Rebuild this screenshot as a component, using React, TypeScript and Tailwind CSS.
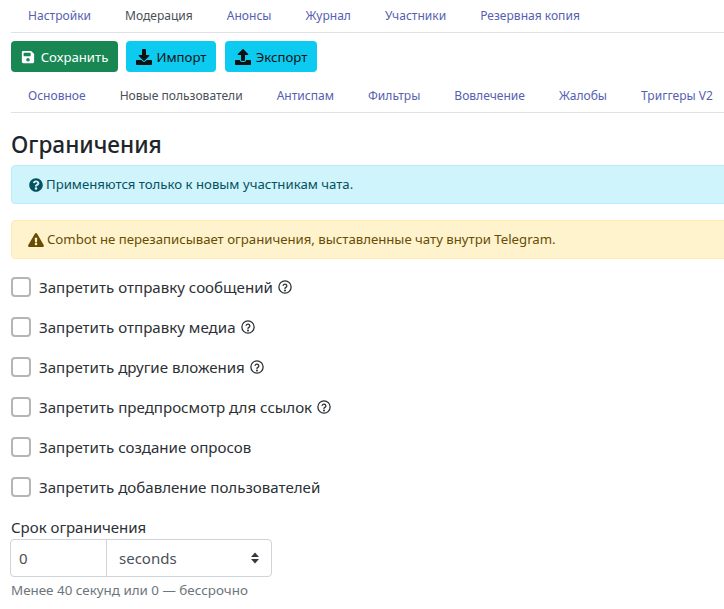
import React from "react";

const top = [
  ["Настройки", false],
  ["Модерация", true],
  ["Анонсы", false],
  ["Журнал", false],
  ["Участники", false],
  ["Резервная копия", false],
] as const;
const sub = [
  ["Основное", false],
  ["Новые пользователи", true],
  ["Антиспам", false],
  ["Фильтры", false],
  ["Вовлечение", false],
  ["Жалобы", false],
  ["Триггеры V2", false],
] as const;

function Tabs({ items }: { items: readonly (readonly [string, boolean])[] }) {
  return (
    <div className="flex h-[33px] items-center border-b border-[#dee2e6] whitespace-nowrap">
      {items.map(([t, active]) => (
        <span key={t} className={`px-[17px] text-[12.05px] leading-[18px] ${active ? "text-[#495057]" : "text-[#5561b0]"}`}>
          {t}
        </span>
      ))}
    </div>
  );
}

function Save() {
  return (
    <svg width="14" height="14" viewBox="0 0 448 512" fill="currentColor">
      <path d="M433.9 129.9l-83.9-83.9A48 48 0 0 0 316.1 32H48C21.5 32 0 53.5 0 80v352c0 26.5 21.5 48 48 48h352c26.500 0 48-21.500 48-48V163.900a48 48 0 0 0-14.100-34zM224 416c-35.300 0-64-28.700-64-64 0-35.300 28.700-64 64-64s64 28.700 64 64c0 35.300-28.700 64-64 64zm96-304.500V212c0 6.600-5.400 12-12 12H76c-6.600 0-12-5.400-12-12V108c0-6.600 5.400-12 12-12h228.500c3.200 0 6.200 1.300 8.500 3.500l3.500 3.500c2.200 2.300 3.500 5.300 3.500 8.500z" />
    </svg>
  );
}
function Download() {
  return (
    <svg width="16" height="16" viewBox="0 0 512 512" fill="currentColor">
      <path d="M216 0h80c13.300 0 24 10.700 24 24v168h87.700c17.800 0 26.700 21.500 14.100 34.100L269.700 378.300c-7.500 7.500-19.800 7.500-27.300 0L90.100 226.100c-12.600-12.600-3.700-34.100 14.100-34.100H192V24c0-13.300 10.700-24 24-24zm296 376v112c0 13.300-10.700 24-24 24H24c-13.300 0-24-10.700-24-24V376c0-13.300 10.700-24 24-24h146.700l49 49c20.100 20.100 52.500 20.100 72.600 0l49-49H488c13.300 0 24 10.700 24 24z" />
    </svg>
  );
}
function Upload() {
  return (
    <svg width="16" height="16" viewBox="0 0 512 512" fill="currentColor">
      <path d="M296 384h-80c-13.300 0-24-10.700-24-24V192h-87.700c-17.800 0-26.700-21.500-14.100-34.100L242.300 5.700c7.500-7.500 19.800-7.500 27.300 0l152.200 152.200c12.600 12.600 3.700 34.100-14.100 34.100H320v168c0 13.300-10.700 24-24 24zm216-8v112c0 13.300-10.700 24-24 24H24c-13.300 0-24-10.700-24-24V376c0-13.300 10.700-24 24-24h136v8c0 30.900 25.100 56 56 56h80c30.900 0 56-25.100 56-56v-8h136c13.300 0 24 10.700 24 24z" />
    </svg>
  );
}
function QSolid() {
  return (
    <svg width="14" height="14" viewBox="0 0 512 512" fill="currentColor">
      <path d="M504 256c0 137-111 248-248 248S8 393 8 256 119 8 256 8s248 111 248 248zM262.700 90c-54.500 0-89.300 23-116.500 63.800-3.500 5.300-2.400 12.400 2.700 16.300l34.700 26.300c5.200 3.900 12.600 3 16.700-2.100 17.900-22.700 30.100-35.800 57.300-35.800 20.400 0 45.700 13.100 45.700 33 0 15-12.400 22.700-32.600 34-23.600 13.200-54.800 29.700-54.800 70.900V300c0 6.600 5.400 12 12 12h56c6.600 0 12-5.400 12-12v-1.300c0-28.600 83.500-29.800 83.500-107.200C379.500 133.200 319 90 262.700 90zM256 339.200c-25.500 0-46.200 20.700-46.200 46.200 0 25.500 20.700 46.200 46.200 46.200s46.200-20.700 46.200-46.200c0-25.500-20.700-46.200-46.200-46.200z" />
    </svg>
  );
}
function Warn() {
  return (
    <svg width="16" height="14" viewBox="0 0 576 512" fill="currentColor">
      <path d="M569.500 440C588 472 564.800 512 527.900 512H48.100c-36.900 0-60-40.100-41.600-72L246.400 24c18.500-32 64.700-32 83.200 0l239.900 416zM288 354c-25.400 0-46 20.600-46 46s20.600 46 46 46 46-20.600 46-46-20.600-46-46-46zm-43.700-165.300l7.400 136c.3 6.400 5.600 11.300 12 11.300h48.500c6.400 0 11.600-5 12-11.300l7.400-136c.4-6.900-5.100-12.700-12-12.700h-63.400c-6.900 0-12.400 5.800-12 12.700z" />
    </svg>
  );
}
function QOutline() {
  return (
    <svg width="14" height="14" viewBox="0 0 24 24" fill="none" stroke="currentColor" strokeWidth="2.2" strokeLinecap="round" strokeLinejoin="round">
      <circle cx="12" cy="12" r="10.500" />
      <path d="M8.800 9.200a3.300 3.300 0 0 1 6.400 1c0 2.200-3.200 2.600-3.200 4.300" />
      <circle cx="12" cy="18" r="0.700" fill="currentColor" />
    </svg>
  );
}

const checks: [string, boolean][] = [
  ["Запретить отправку сообщений", true],
  ["Запретить отправку медиа", true],
  ["Запретить другие вложения", true],
  ["Запретить предпросмотр для ссылок", true],
  ["Запретить создание опросов", false],
  ["Запретить добавление пользователей", false],
];

export default function App() {
  return (
    <div className="h-[609px] w-[724px] overflow-hidden bg-white pl-[11px] font-['Noto_Sans','Open_Sans',sans-serif] text-[#2b3035]">
      <Tabs items={top} />
      <div className="flex pt-[8px] text-[13.2px] leading-[19px]">
        <button className="mr-[8px] flex h-[31px] w-[107px] items-center justify-center gap-[6px] rounded-[4px] bg-[#198754] pt-[1px] text-white">
          <Save />
          Сохранить
        </button>
        <button className="mr-[9px] flex h-[31px] w-[90px] items-center justify-center gap-[5px] rounded-[4px] bg-[#0dcaf0] pt-[1px] text-[#111]">
          <Download />
          Импорт
        </button>
        <button className="flex h-[31px] w-[92px] items-center justify-center gap-[5px] rounded-[4px] bg-[#0dcaf0] pt-[1px] text-[#111]">
          <Upload />
          Экспорт
        </button>
      </div>
      <div className="pt-[8px]">
        <Tabs items={sub} />
      </div>
      <h2 className="mt-[16px] text-[22.6px] leading-[32px] font-medium text-[#212529]">Ограничения</h2>
      <div className="mt-[4px] -mr-[20px] flex h-[39px] items-center gap-[3px] rounded-[4px] border border-[#b6effb] bg-[#cff4fc] pt-[1px] pl-[17px] text-[13.2px] text-[#055160]">
        <QSolid />
        Применяются только к новым участникам чата.
      </div>
      <div className="mt-[16px] -mr-[20px] flex h-[39px] items-center gap-[3px] rounded-[4px] border border-[#ffecb5] bg-[#fff3cd] pl-[16px] text-[13.2px] text-[#664d03]">
        <Warn />
        Combot не перезаписывает ограничения, выставленные чату внутри Telegram.
      </div>
      <div className="mt-[18px] flex flex-col gap-[20px]">
        {checks.map(([t, help]) => (
          <label key={t} className="flex h-[20px] items-center text-[15.1px] leading-[20px]">
            <span className="mr-[8px] h-[20px] w-[20px] shrink-0 rounded-[4px] border-2 border-[#b5b5b5] bg-white" />
            {t}
            {help && (
              <span className="ml-[5px] inline-flex">
                <QOutline />
              </span>
            )}
          </label>
        ))}
      </div>
      <div className="mt-[20px] text-[15px] leading-[20px]">Срок ограничения</div>
      <div className="mt-[2px] -ml-[1px] flex h-[38px] w-[262px] rounded-[4px] border border-[#ced4da] text-[15px] text-[#495057]">
        <div className="flex w-[96px] items-center border-r border-[#ced4da] pl-[8px]">0</div>
        <div className="flex flex-1 items-center justify-between pr-[11px] pl-[12px]">
          seconds
          <svg width="10" height="14" viewBox="0 0 10 14" fill="#343a40">
            <path d="M5 1.500 9 6H1zM5 12.500 1 8h8z" />
          </svg>
        </div>
      </div>
      <div className="mt-[3px] text-[13.4px] leading-[20px] text-[#6c757d]">Менее 40 секунд или 0 — бессрочно</div>
    </div>
  );
}
